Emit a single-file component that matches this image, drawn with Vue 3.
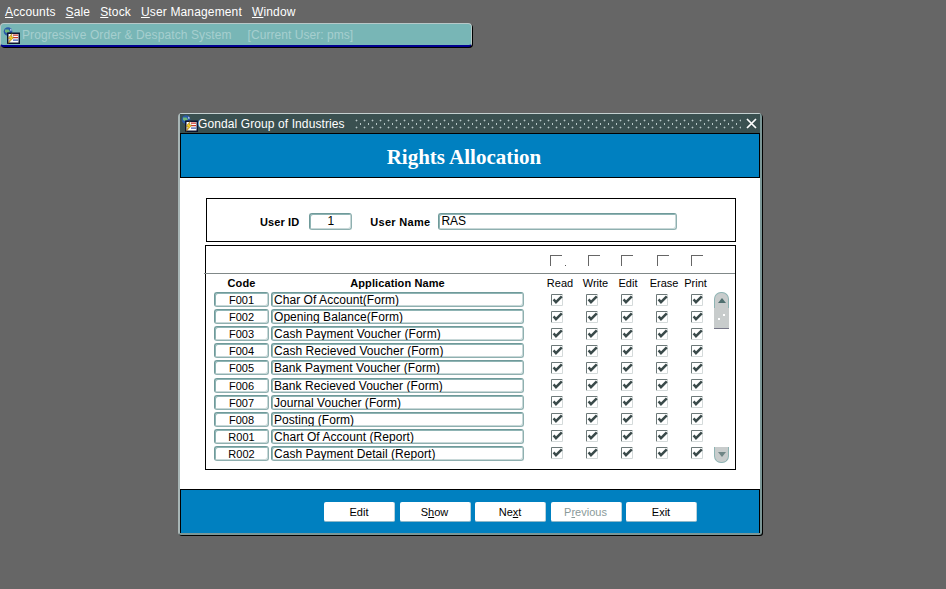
<template>
  <div class="desktop">
    <nav class="menu">
      <span v-for="m in menus" :key="m" class="menu-item"><u>{{ m[0] }}</u>{{ m.slice(1) }}</span>
    </nav>

    <div class="mdi-bar">
      <svg class="app-icon" viewBox="0 0 17 17" width="17" height="17">
        <circle cx="5" cy="4.500" r="4.300" fill="#2a5aa8" />
        <path d="M2 2.500h3.500l1.500 2-3 1.500-2-1z" fill="#6fb87a" />
        <path d="M7 1.500l2 1.500-1.500 1z" fill="#d8e4f0" />
        <rect x="4" y="5.500" width="13" height="11.500" fill="#0c1430" />
        <rect x="5.500" y="7" width="10" height="8.500" fill="#fff" />
        <path d="M10 7.500h5v1.300h-5zM10 10h5v1.200h-5z" fill="#c8352b" />
        <path d="M10 12.500h5v1.200h-5z" fill="#3454a8" />
        <path d="M9 6.500 5 11.500h2.300L5 16.500l6-6.500H8.500z" fill="#f4d21f" stroke="#8a5a10" stroke-width=".5" />
      </svg>
      <span class="mdi-title">Progressive Order &amp; Despatch System</span>
      <span class="mdi-user">[Current User: pms]</span>
    </div>

    <section class="window">
      <header class="title-bar">
        <svg class="app-icon" viewBox="0 0 17 17" width="17" height="17">
          <circle cx="5" cy="4.500" r="4.300" fill="#2a5aa8" />
          <path d="M2 2.500h3.500l1.500 2-3 1.500-2-1z" fill="#6fb87a" />
          <path d="M7 1.500l2 1.500-1.500 1z" fill="#d8e4f0" />
          <rect x="4" y="5.500" width="13" height="11.500" fill="#0c1430" />
          <rect x="5.500" y="7" width="10" height="8.500" fill="#fff" />
          <path d="M10 7.500h5v1.300h-5zM10 10h5v1.200h-5z" fill="#c8352b" />
          <path d="M10 12.500h5v1.200h-5z" fill="#3454a8" />
          <path d="M9 6.500 5 11.500h2.300L5 16.500l6-6.500H8.500z" fill="#f4d21f" stroke="#8a5a10" stroke-width=".5" />
        </svg>
        <span class="window-name">Gondal Group of Industries</span>
        <span class="dither"></span>
        <svg class="close" viewBox="0 0 11 11" width="11" height="11">
          <path d="M1 1l9 9M10 1l-9 9" stroke="#fff" stroke-width="1.700" fill="none" />
        </svg>
      </header>

      <div class="banner">Rights Allocation</div>

      <div class="content">
        <div class="user-box">
          <label class="bold user-id-label">User ID</label>
          <div class="field user-id">1</div>
          <label class="bold user-name-label">User Name</label>
          <div class="field user-name">RAS</div>
        </div>

        <div class="grid-box">
          <div class="select-row">
            <span v-for="(x, i) in headChecks" :key="i" class="head-check" :style="{ left: x + 'px' }"></span>
            <span class="stray-dot"></span>
          </div>

          <div class="grid-body">
            <div class="grid-main">
              <div class="row head-row">
                <span class="bold col-code">Code</span>
                <span class="bold col-name">Application Name</span>
                <span v-for="c in rightsCols" :key="c" class="col-check">{{ c }}</span>
              </div>

              <div v-for="r in rows" :key="r[0]" class="row">
                <div class="field col-code code">{{ r[0] }}</div>
                <div class="field col-name name">{{ r[1] }}</div>
                <span v-for="c in rightsCols" :key="c" class="col-check">
                  <svg viewBox="0 0 12 12" width="12" height="12">
                    <path d="M.5 11.500V.5h11" stroke="#6c7878" fill="none" />
                    <path d="M.5 11.500h11V.5" stroke="#d4dada" fill="none" />
                    <path d="M2.600 5.400 5 8.200 10.800 2.400" stroke="#3a4a4a" stroke-width="2.500" fill="none" />
                  </svg>
                </span>
              </div>
            </div>

            <div class="scrollbar">
              <div class="scroll-top">
                <div class="arrow-btn up"><i></i></div>
                <div class="thumb"></div>
              </div>
              <div class="arrow-btn down"><i></i></div>
            </div>
          </div>
        </div>
      </div>

      <footer class="footer">
        <button class="btn">Edit</button>
        <button class="btn">S<u>h</u>ow</button>
        <button class="btn">Ne<u>x</u>t</button>
        <button class="btn disabled">P<u>r</u>evious</button>
        <button class="btn">Exit</button>
      </footer>
    </section>
  </div>
</template>

<script setup>
const menus = ["Accounts", "Sale", "Stock", "User Management", "Window"];
const rightsCols = ["Read", "Write", "Edit", "Erase", "Print"];
const headChecks = [346, 384, 417, 453, 487];
const rows = [
  ["F001", "Char Of Account(Form)"],
  ["F002", "Opening Balance(Form)"],
  ["F003", "Cash Payment Voucher (Form)"],
  ["F004", "Cash Recieved Voucher (Form)"],
  ["F005", "Bank Payment Voucher (Form)"],
  ["F006", "Bank Recieved Voucher (Form)"],
  ["F007", "Journal Voucher (Form)"],
  ["F008", "Posting (Form)"],
  ["R001", "Chart Of Account (Report)"],
  ["R002", "Cash Payment Detail (Report)"],
];
</script>

<style>
html,
body {
  margin: 0;
  background: #666666;
}
</style>

<style scoped>
.desktop {
  width: 946px;
  height: 589px;
  overflow: hidden;
  background: #666666;
  font-family: "Liberation Sans", Arial, sans-serif;
  font-size: 12px;
  color: #000;
}

.menu {
  display: flex;
  gap: 10px;
  height: 23px;
  padding-left: 5px;
  box-sizing: border-box;
  padding-top: 5px;
  line-height: 14px;
  color: #fff;
  letter-spacing: 0.15px;
}

.mdi-bar {
  display: flex;
  align-items: center;
  width: 472px;
  height: 24px;
  box-sizing: border-box;
  padding: 1px 0 0 2px;
  background: #78b6b6;
  border: 1px solid #b8c8c8;
  border-bottom: 2px solid #000090;
  border-radius: 4px;
  box-shadow: 1px 1px 0 #000;
  color: #a6cfcf;
}

.mdi-title {
  margin-left: 2px;
  letter-spacing: 0.1px;
}

.mdi-user {
  margin-left: 16px;
  letter-spacing: 0.05px;
}

.window {
  width: 584px;
  height: 422px;
  margin: 66px 0 0 178px;
  box-sizing: border-box;
  display: flex;
  flex-direction: column;
  background: #fff;
  border: 2px solid #7b9696;
  border-top: 1px solid #c4d0d0;
  border-left-color: #a8b6b6;
  border-radius: 4px 4px 3px 3px;
  box-shadow: 1px 1px 0 #000;
}

.title-bar {
  display: flex;
  align-items: center;
  height: 20px;
  flex: none;
  padding: 0 3px 0 1px;
  background: #3a5050;
  border-bottom: 1px solid #000;
  box-sizing: border-box;
  color: #fff;
}

.window-name {
  padding-top: 1px;
  letter-spacing: 0.1px;
}

.dither {
  flex: 1;
  height: 10px;
  margin: 0 5px 0 10px;
  background-image:
    radial-gradient(circle at 1.500px 1.500px, #b8c8c8 0.8px, transparent 1.100px),
    radial-gradient(circle at 5.500px 5px, #b8c8c8 0.8px, transparent 1.100px);
  background-size: 8px 7px;
}

.close {
  flex: none;
}

.banner {
  flex: none;
  height: 44px;
  box-sizing: border-box;
  background: #0080c0;
  border-bottom: 1px solid #000;
  border-left: 1px solid #000;
  border-right: 1px solid #000;
  color: #fff;
  text-align: center;
  font-family: "Liberation Serif", "Times New Roman", serif;
  font-weight: bold;
  font-size: 21px;
  line-height: 47px;
  padding-right: 12px;
}

.content {
  flex: 1;
  padding: 20px 24px 0 25px;
}

.user-box {
  display: flex;
  align-items: center;
  height: 44px;
  padding-top: 3px;
  margin-left: 1px;
  box-sizing: border-box;
  border: 1px solid #000;
}

.bold {
  font-weight: bold;
  font-size: 11px;
  letter-spacing: 0.1px;
}

.user-id-label {
  margin-left: 53px;
}

.user-id {
  width: 43px;
  height: 17px;
  margin-left: 10px;
  text-align: center;
}

.user-name-label {
  margin-left: 18px;
  letter-spacing: 0.3px;
}

.user-name {
  width: 239px;
  height: 17px;
  margin-left: 8px;
  padding-left: 2px;
}

.field {
  box-sizing: border-box;
  background: #fff;
  border: 1px solid #6f9a9a;
  border-right-color: #8fb0b0;
  border-bottom-color: #8fb0b0;
  box-shadow: inset 1px 1px 0 #8fb4b4, inset -1px -1px 0 #c8d8d8;
  border-radius: 3px;
  font-size: 12px;
  line-height: 14px;
  white-space: nowrap;
  overflow: hidden;
}

.grid-box {
  height: 225px;
  margin-top: 3px;
  box-sizing: border-box;
  border: 1px solid #000;
}

.select-row {
  position: relative;
  height: 27px;
  border-bottom: 1px solid #808888;
  margin-left: -2px;
}

.head-check {
  position: absolute;
  top: 9px;
  width: 11px;
  height: 10px;
  border-top: 1px solid #666;
  border-left: 1px solid #666;
}

.stray-dot {
  position: absolute;
  left: 361px;
  top: 19px;
  width: 1px;
  height: 1px;
  background: #555;
}

.grid-body {
  display: flex;
}

.grid-main {
  width: 508px;
}

.row {
  display: flex;
  align-items: center;
  height: 17.1px;
  padding-left: 8px;
}

.head-row {
  height: 17px;
}

.head-row .col-code,
.head-row .col-name {
  text-align: center;
}

.col-code {
  width: 55px;
  flex: none;
}

.col-name {
  width: 253px;
  flex: none;
  margin-left: 2px;
}

.code,
.name {
  height: 15px;
}

.code {
  text-align: center;
  font-size: 11px;
}

.name {
  padding-left: 2px;
  letter-spacing: 0.05px;
}

.col-check {
  flex: none;
  width: 34.800px;
  display: flex;
  justify-content: center;
  font-size: 11px;
}

.col-check:nth-child(3) {
  margin-left: 16px;
}

/* header labels sit off the checkbox centres in the original form */
.head-row .col-check:nth-child(3) {
  margin-left: 18px;
  width: 36px;
}

.head-row .col-check:nth-child(4) {
  width: 35px;
}

.head-row .col-check:nth-child(5) {
  width: 30px;
}

.head-row .col-check:nth-child(6) {
  width: 42px;
}

.head-row .col-check:nth-child(7) {
  width: 21px;
}

.scrollbar {
  display: flex;
  flex-direction: column;
  justify-content: space-between;
  width: 15px;
  height: 189px;
  padding-top: 18px;
  box-sizing: border-box;
}

.arrow-btn {
  width: 15px;
  height: 16px;
  box-sizing: border-box;
  background: #c8cccc;
  border: 1px solid #8fb4b4;
  display: flex;
  align-items: center;
  justify-content: center;
}

.arrow-btn.up {
  border-radius: 7px 7px 0 0;
  border-bottom: none;
}

.arrow-btn.down {
  border-radius: 0 0 7px 7px;
  border-top: none;
}

.arrow-btn i {
  width: 0;
  height: 0;
  border-left: 4px solid transparent;
  border-right: 4px solid transparent;
}

.up i {
  border-bottom: 5px solid #4f6f6f;
}

.down i {
  border-top: 5px solid #6f8585;
}

.thumb {
  position: relative;
  height: 21px;
  background: #c8cccc;
  border-bottom: 1px solid #778;
  box-sizing: border-box;
}

.thumb::before,
.thumb::after {
  content: "";
  position: absolute;
  width: 2px;
  height: 2px;
  background: #fff;
}

.thumb::before {
  left: 9px;
  top: 6px;
}

.thumb::after {
  left: 4px;
  top: 10px;
}

.footer {
  flex: none;
  height: 44px;
  box-sizing: border-box;
  display: flex;
  align-items: flex-start;
  gap: 4.500px;
  padding: 12px 0 0 143px;
  background: #0080c0;
  border-top: 1px solid #000;
  border-left: 1px solid #000;
  border-right: 1px solid #000;
}

.btn {
  width: 71px;
  height: 20px;
  padding: 0;
  background: #fff;
  border: none;
  border-right: 1px solid #b9d2dc;
  border-bottom: 1px solid #8fb8c8;
  border-radius: 2px;
  font-family: inherit;
  font-size: 11px;
  color: #000;
}

.btn.disabled {
  color: #8a9a9a;
}
</style>
